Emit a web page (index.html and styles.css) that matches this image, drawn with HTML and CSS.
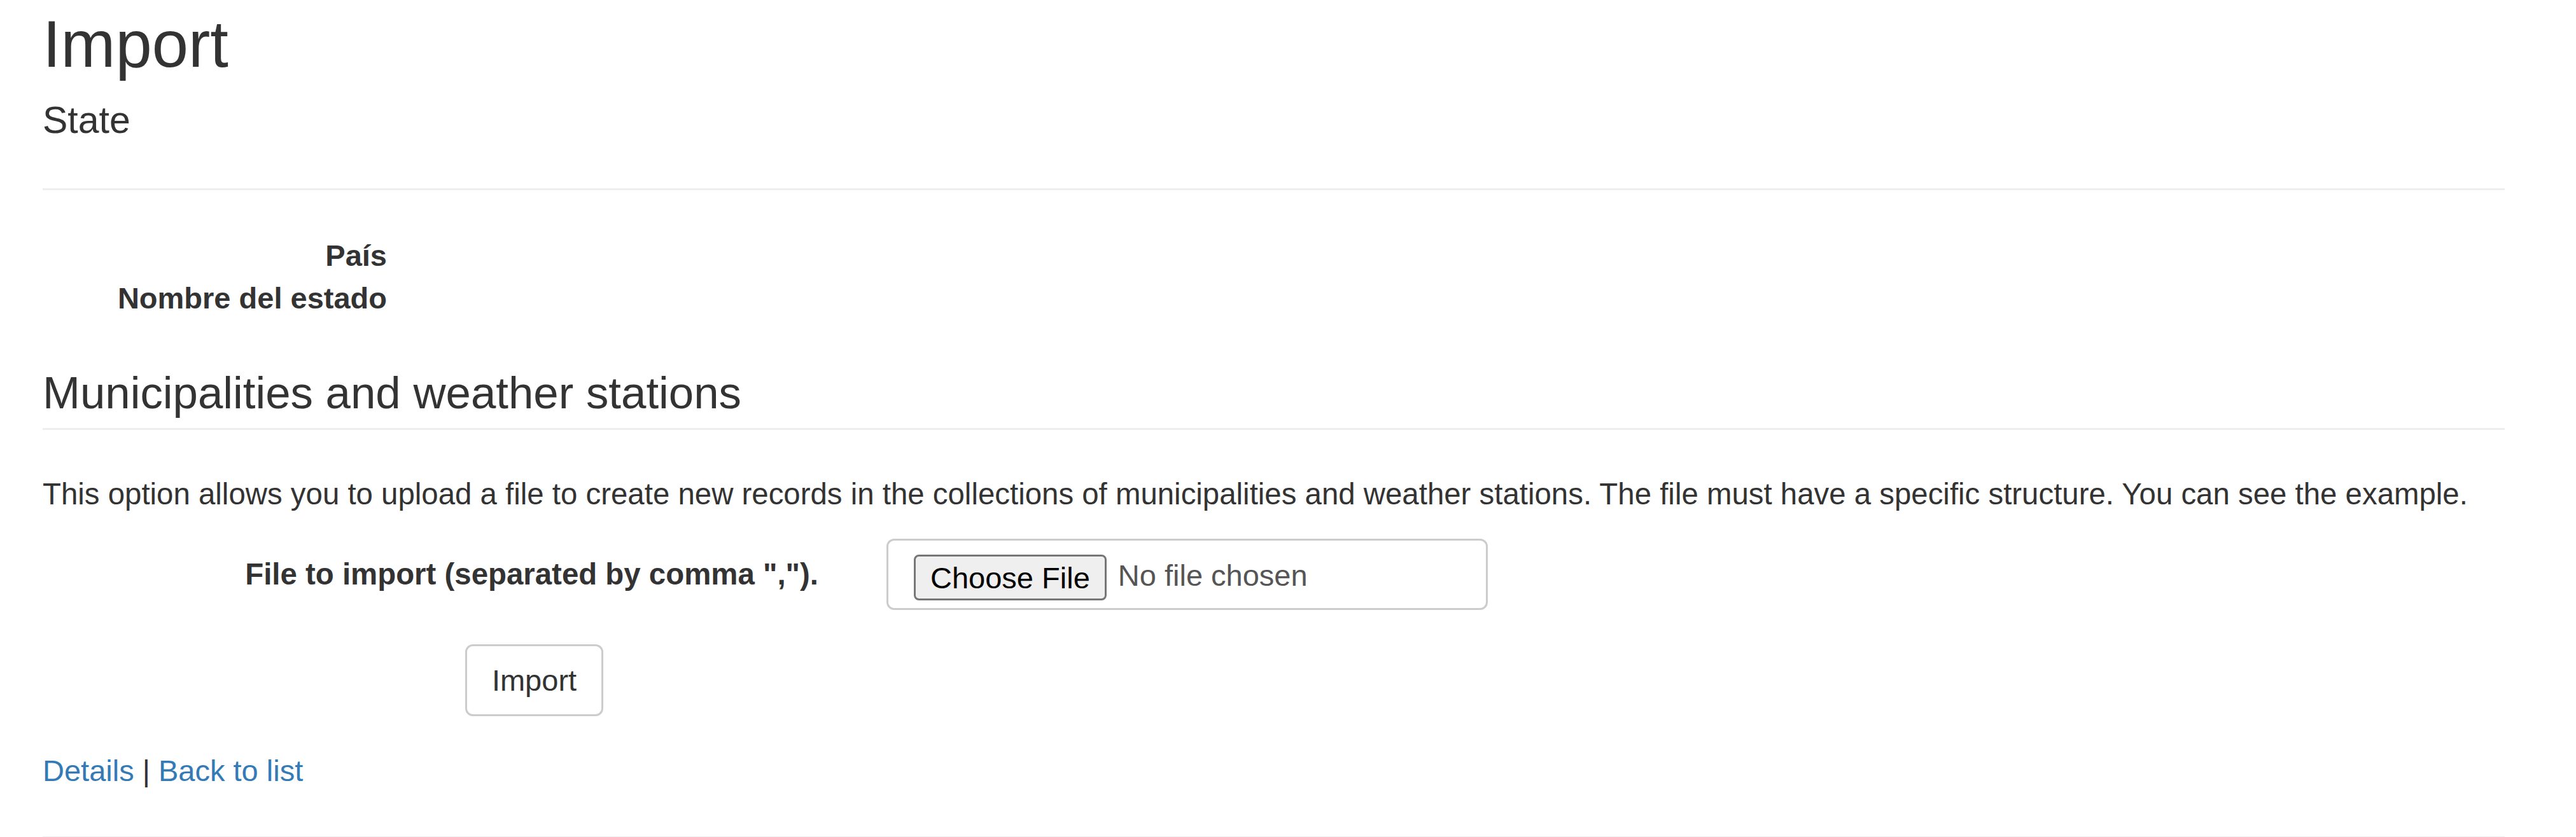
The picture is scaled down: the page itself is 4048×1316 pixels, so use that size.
FILE: index.html
```html
<!DOCTYPE html>
<html lang="en">
<head>
<meta charset="utf-8">
<title>Import - State</title>
<link rel="stylesheet" href="styles.css">
</head>
<body>
<main class="container">
  <h1 class="title">Import</h1>
  <h4 class="subtitle">State</h4>
  <hr class="rule rule-top">
  <dl class="details">
    <dt>País</dt>
    <dd></dd>
    <dt>Nombre del estado</dt>
    <dd></dd>
  </dl>
  <h3 class="section-title">Municipalities and weather stations</h3>
  <hr class="rule rule-section">
  <p class="intro">This option allows you to upload a file to create new records in the collections of municipalities and weather stations. The file must have a specific structure. You can see the example.</p>
  <form class="import-form">
    <div class="form-row">
      <label class="form-label" for="file">File to import (separated by comma ",").</label>
      <input class="file-input" id="file" type="file">
    </div>
    <div class="form-actions">
      <button class="btn" type="button">Import</button>
    </div>
  </form>
  <p class="links"><a href="#">Details</a> | <a href="#">Back to list</a></p>
  <hr class="rule rule-bottom">
</main>
</body>
</html>
```

FILE: styles.css
```css
html, body {
  margin: 0;
  padding: 0;
  background: #ffffff;
}

body {
  font-family: "Liberation Sans", Arial, sans-serif;
  font-size: 47px;
  line-height: 67.4px;
  color: #333333;
}

.container {
  margin-left: 67px;
  width: 3869px;
  display: flow-root;
}

.title {
  font-size: 103px;
  line-height: 116.6px;
  font-weight: 400;
  margin: 12px 0 0 0;
}

.subtitle {
  font-size: 59px;
  line-height: 65px;
  font-weight: 400;
  margin: 28px 0 0 0;
}

.rule {
  border: 0;
  border-top: 3px solid #eeeeee;
  margin: 0;
}

.rule-top {
  margin-top: 74px;
}

.details {
  margin: 69px 0 0 0;
  display: grid;
  grid-template-columns: 541px 1fr;
}

.details dt {
  font-weight: 700;
  text-align: right;
}

.details dd {
  margin: 0;
}

.section-title {
  font-size: 70.8px;
  line-height: 78px;
  font-weight: 400;
  margin: 77px 0 0 0;
}

.rule-section {
  margin-top: 16px;
}

.intro {
  margin: 67px 0 0 0;
  font-size: 47.4px;
}

.import-form {
  margin-top: 36px;
}

.form-row {
  display: flex;
  align-items: center;
}

.form-label {
  width: 1219px;
  text-align: right;
  font-weight: 700;
  font-size: 47.4px;
  flex: none;
}

.file-input {
  margin-left: 107px;
  box-sizing: border-box;
  width: 945px;
  height: 112px;
  padding: 2px 40px 0 40px;
  border: 3px solid #cccccc;
  border-radius: 12px;
  background: #ffffff;
  font-family: "Liberation Sans", Arial, sans-serif;
  font-size: 47px;
  line-height: 106px;
  color: #555555;
}

.file-input::file-selector-button {
  box-sizing: border-box;
  height: 72px;
  padding: 0 23px;
  margin: 0 18px 0 0;
  border: 3px solid #767676;
  border-radius: 8px;
  background: #efefef;
  color: #000000;
  font-family: "Liberation Sans", Arial, sans-serif;
  font-size: 47px;
  vertical-align: middle;
}

.form-actions {
  margin-top: 54px;
  padding-left: 664px;
}

.btn {
  box-sizing: border-box;
  width: 217px;
  height: 113px;
  padding: 0;
  border: 3px solid #cccccc;
  border-radius: 12px;
  background: #ffffff;
  color: #333333;
  font-family: "Liberation Sans", Arial, sans-serif;
  font-size: 47px;
  line-height: 67.4px;
}

.links {
  margin: 52px 0 0 0;
}

.links a {
  color: #337ab7;
  text-decoration: none;
}

.rule-bottom {
  margin-top: 70px;
}
```
